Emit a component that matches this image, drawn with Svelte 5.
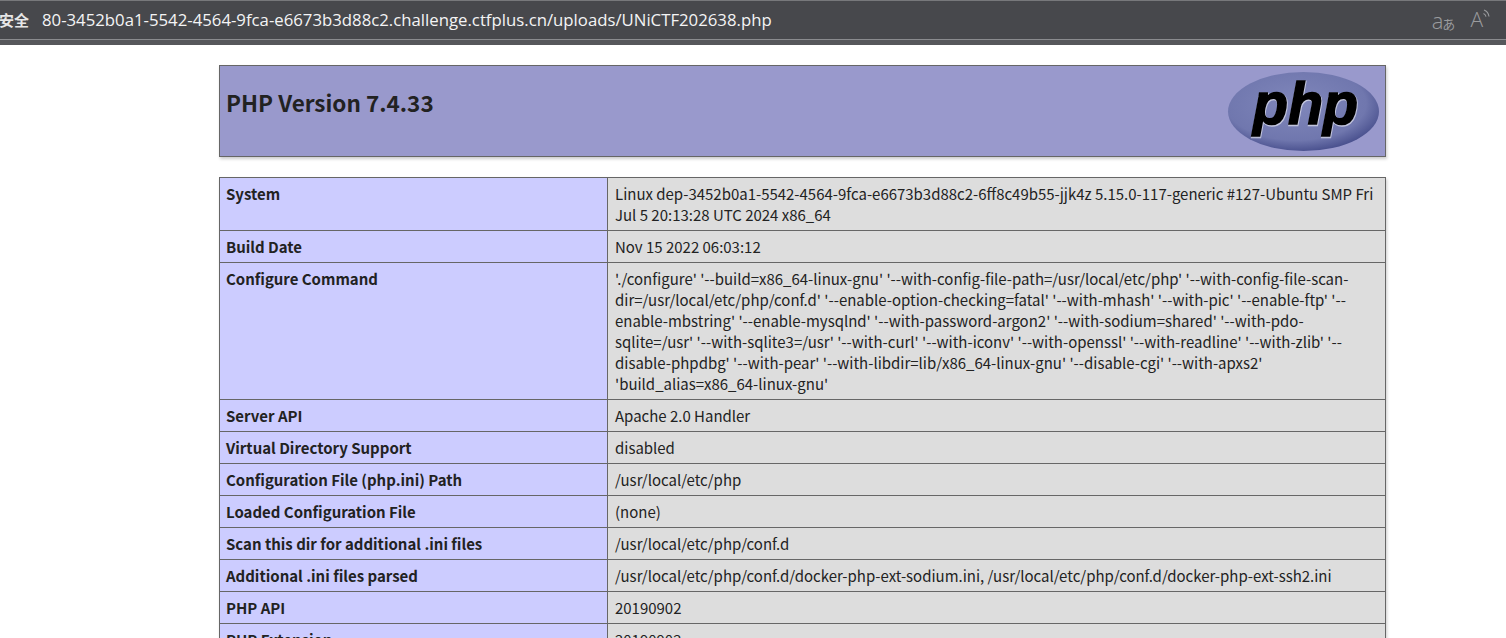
<script>
  const rows = [
    ['System', 'Linux dep-3452b0a1-5542-4564-9fca-e6673b3d88c2-6ff8c49b55-jjk4z 5.15.0-117-generic #127-Ubuntu SMP Fri Jul 5 20:13:28 UTC 2024 x86_64'],
    ['Build Date', 'Nov 15 2022 06:03:12'],
    ['Configure Command', "'./configure' '--build=x86_64-linux-gnu' '--with-config-file-path=/usr/local/etc/php' '--with-config-file-scan-dir=/usr/local/etc/php/conf.d' '--enable-option-checking=fatal' '--with-mhash' '--with-pic' '--enable-ftp' '--enable-mbstring' '--enable-mysqlnd' '--with-password-argon2' '--with-sodium=shared' '--with-pdo-sqlite=/usr' '--with-sqlite3=/usr' '--with-curl' '--with-iconv' '--with-openssl' '--with-readline' '--with-zlib' '--disable-phpdbg' '--with-pear' '--with-libdir=lib/x86_64-linux-gnu' '--disable-cgi' '--with-apxs2' 'build_alias=x86_64-linux-gnu'"],
    ['Server API', 'Apache 2.0 Handler'],
    ['Virtual Directory Support', 'disabled'],
    ['Configuration File (php.ini) Path', '/usr/local/etc/php'],
    ['Loaded Configuration File', '(none)'],
    ['Scan this dir for additional .ini files', '/usr/local/etc/php/conf.d'],
    ['Additional .ini files parsed', '/usr/local/etc/php/conf.d/docker-php-ext-sodium.ini, /usr/local/etc/php/conf.d/docker-php-ext-ssh2.ini'],
    ['PHP API', '20190902'],
    ['PHP Extension', '20190902'],
  ];
</script>

<div class="window">
  <header class="bar">
    <div class="address">
      <span class="secure">安全</span>
      <span class="url">80-3452b0a1-5542-4564-9fca-e6673b3d88c2.challenge.ctfplus.cn/uploads/UNiCTF202638.php</span>
      <span class="tools">
        <span class="translate"><span class="big">a</span><span class="small">あ</span></span>
        <span class="read">A<svg width="8" height="13" viewBox="0 0 8 13" fill="none" stroke="#9a9b9e" stroke-width="1.1"><path d="M0.5 4.500c1.400.6 2.200 1.700 2.500 3.200"/><path d="M1 1c2.700 1 4.500 3.200 5 6.500"/></svg></span>
      </span>
    </div>
  </header>
  <main class="page">
    <div class="center">
      <div class="banner">
        <h1>PHP Version 7.4.33</h1>
        <svg class="logo" width="153" height="81" viewBox="0 0 153 81">
          <defs>
            <radialGradient id="oval" cx="0.45" cy="0.4" r="0.62">
              <stop offset="0" stop-color="#8087bb" />
              <stop offset="0.75" stop-color="#7077ae" />
              <stop offset="1" stop-color="#474e8c" />
            </radialGradient>
          </defs>
          <ellipse cx="77.500" cy="40.500" rx="75.500" ry="39.500" fill="url(#oval)" />
          <text class="logotext shadow" x="27.500" y="54" textLength="105" lengthAdjust="spacingAndGlyphs">php</text>
          <text class="logotext" x="27" y="53" textLength="105" lengthAdjust="spacingAndGlyphs">php</text>
        </svg>
      </div>
      <table>
        <tbody>
          {#each rows as [k, v]}
            <tr><td class="e">{k}</td><td class="v">{v}</td></tr>
          {/each}
        </tbody>
      </table>
    </div>
  </main>
</div>

<style>
  :global(body) {
    margin: 0;
    background: #fff;
  }
  .window {
    width: 1506px;
    height: 638px;
    overflow: hidden;
    display: flex;
    flex-direction: column;
    font-family: "Noto Sans CJK SC", "Noto Sans", sans-serif;
  }
  .bar {
    height: 45px;
    flex: none;
    box-sizing: border-box;
    background: #56575b;
    border-top: 1px solid #77787b;
  }
  .address {
    box-sizing: border-box;
    border-bottom: 1px solid #8a8b8e;
    background: #47484c;
    display: flex;
    align-items: center;
    height: 39px;
    padding-bottom: 1px;
  }
  .secure {
    color: #e6e6e6;
    font-size: 15px;
    font-weight: 700;
    margin-left: -1px;
    width: 43px;
    flex: none;
  }
  .url {
    color: #f4f4f5;
    font-family: "Open Sans", sans-serif;
    font-size: 16.75px;
    white-space: nowrap;
  }
  .tools {
    margin-left: auto;
    display: flex;
    align-items: center;
    gap: 15px;
    padding-right: 15px;
    color: #9a9b9e;
  }
  .translate {
    display: flex;
    align-items: flex-end;
    line-height: 1;
  }
  .big {
    font-size: 22px;
    font-weight: 300;
    font-family: "Open Sans", sans-serif;
  }
  .small {
    font-size: 13px;
    margin-left: -1px;
    margin-bottom: 1px;
  }
  .read {
    display: flex;
    align-items: flex-start;
    font-size: 21px;
    font-weight: 300;
    font-family: "Open Sans", sans-serif;
    line-height: 1;
  }
  .page {
    flex: 1;
    padding-top: 20px;
    color: #222;
    font-size: 14.98px;
    line-height: 21px;
  }
  .center {
    width: 1167px;
    margin-left: 219px;
  }
  .banner {
    height: 92px;
    box-sizing: border-box;
    border: 1px solid #666;
    background: #9999cc;
    box-shadow: 1px 2px 3px #ccc;
    display: flex;
    justify-content: space-between;
    align-items: flex-start;
    padding: 5px 6px 0 6px;
    margin-bottom: 20px;
  }
  h1 {
    margin: 4px 0 0;
    font-size: 22.5px;
    font-weight: 700;
    line-height: 55px;
    color: #222;
  }
  .logo {
    flex: none;
  }
  .logotext {
    font-family: "Liberation Sans", sans-serif;
    font-size: 59px;
    font-weight: 700;
    font-style: italic;
    fill: #000;
    stroke: #000;
    stroke-width: 1.6px;
  }
  .shadow {
    fill: #fff;
    stroke: #fff;
    stroke-width: 2.4px;
    opacity: 0.55;
  }
  table {
    border-collapse: collapse;
    width: 1167px;
    table-layout: fixed;
    box-shadow: 1px 2px 3px #ccc;
  }
  td {
    border: 1px solid #666;
    padding: 5px 6px 5px 6px;
    vertical-align: baseline;
  }
  .e {
    width: 388px;
    box-sizing: border-box;
    background: #ccccff;
    font-weight: 700;
  }
  .v {
    background: #dddddd;
    padding-left: 7px;
    overflow-wrap: break-word;
  }
</style>
